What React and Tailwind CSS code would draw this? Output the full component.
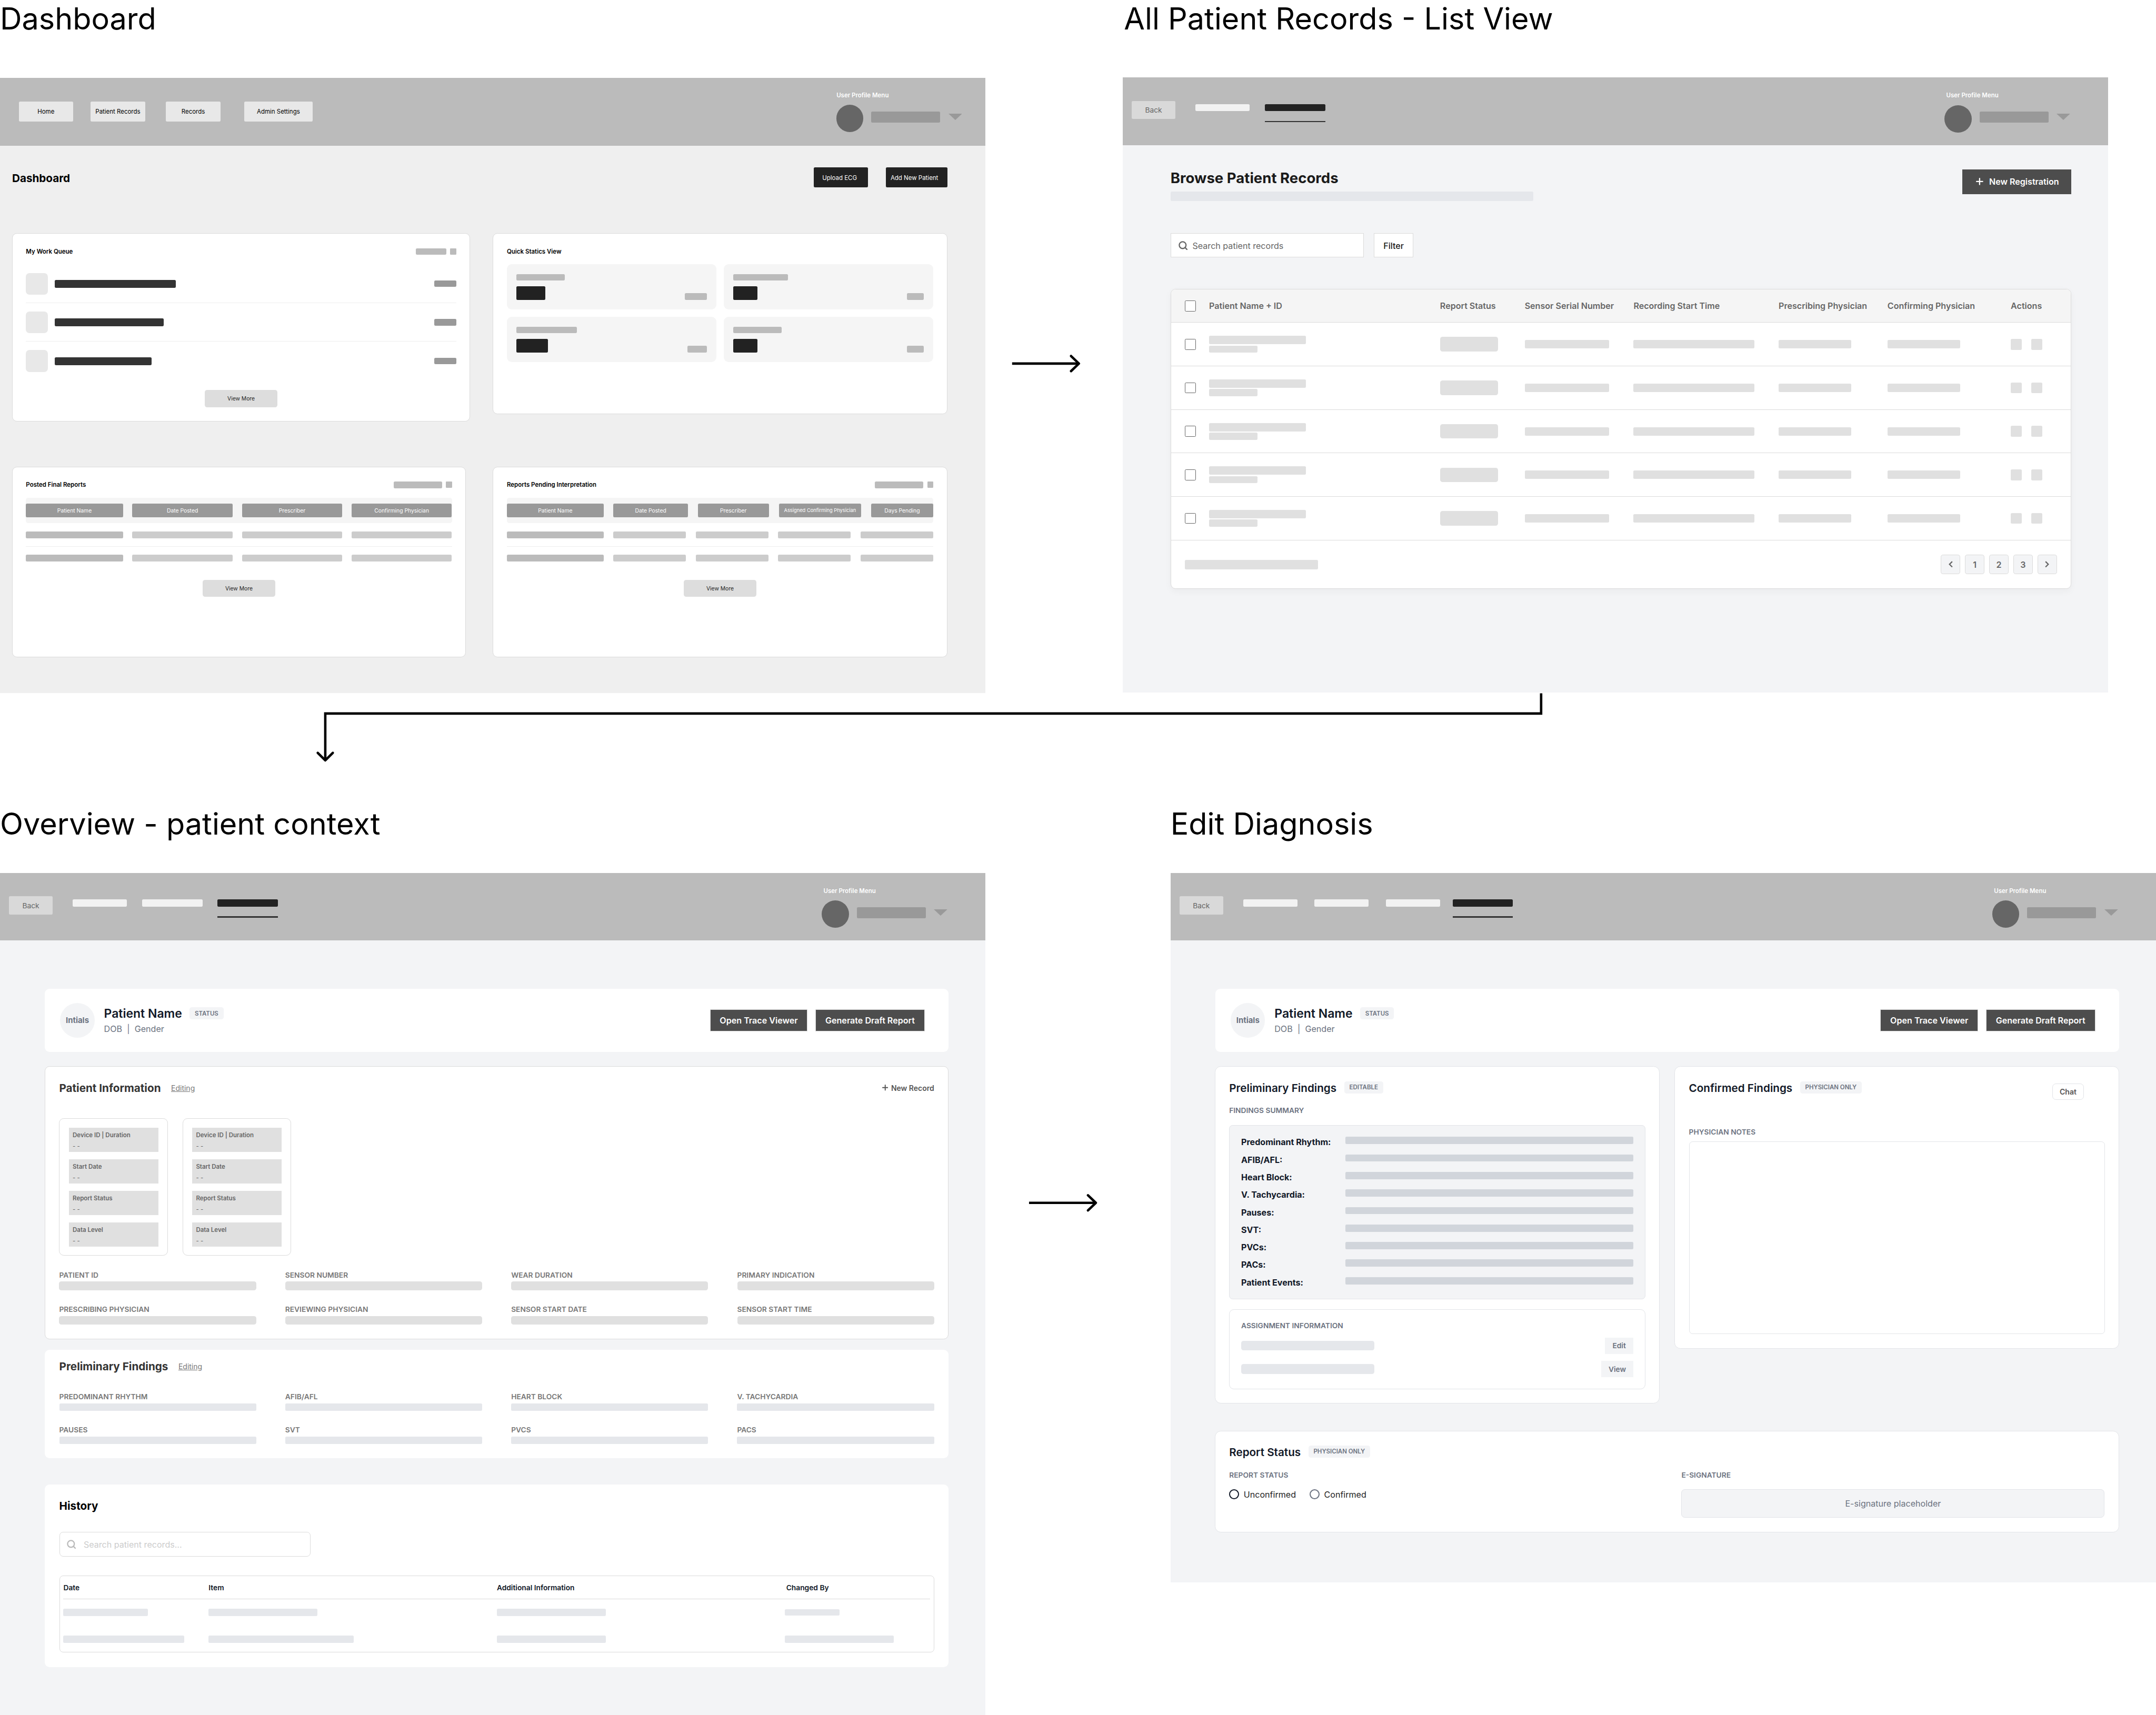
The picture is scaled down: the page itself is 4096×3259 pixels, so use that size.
const ink = "text-[#111827]";

function Caret() {
  return (
    <svg className="ml-[13.5px] mt-[14.5px] h-[10.5px] w-[22.5px]" viewBox="0 0 22.5 10.5" fill="#999999">
      <path d="M0 0H22.5L11.25 10.5Z" />
    </svg>
  );
}

function Header({ nav, profile, label = "pl-[3px]" }) {
  return (
    <header className="flex h-[112px] items-start justify-between bg-[#bbbbbb]">
      <div className="flex items-start">{nav}</div>
      <div className={profile}>
        <div className={`${label} h-[16px] pt-px text-[10px] leading-[15px] font-semibold text-white whitespace-nowrap`}>
          User Profile Menu
        </div>
        <div className="mt-[8px] flex items-start">
          <div className="size-[45px] rounded-full bg-[#666666]" />
          <div className="mt-[11px] ml-[13px] h-[18px] w-[114px] rounded-[2px] bg-[#999999]" />
          <Caret />
        </div>
      </div>
    </header>
  );
}

function BackButton() {
  return (
    <div className="mt-[39px] ml-[15px] flex h-[30px] w-[72px] items-center justify-center rounded-[2px] bg-[#d9d9d9] pt-px text-[12px] text-[#666666]">
      Back
    </div>
  );
}

function ActiveTab({ className }) {
  return (
    <div className={className}>
      <div className="mt-[44px] h-[12px] w-[100px] rounded-[2px] bg-[#222222]" />
      <div className="mt-[16px] h-[2px] w-[100px] bg-[#333333]" />
    </div>
  );
}

function Title({ children, className }) {
  return (
    <h1 className={`${className} h-[60px] text-[50.1px] leading-[60px] font-normal text-black whitespace-nowrap`}>
      {children}
    </h1>
  );
}

function ViewMore({ className }) {
  return (
    <div
      className={`${className} mx-auto flex h-[28.4px] w-[120px] items-center justify-center rounded-[4px] bg-[#dddddd] pt-px text-[9px] text-[#222222]`}
    >
      View More
    </div>
  );
}

/* ---------- Dashboard ---------- */

function CardTitle({ title, chip }) {
  return (
    <div className="flex h-[20px] items-center justify-between">
      <h3 className="pt-[1.5px] text-[10px] font-semibold text-black whitespace-nowrap">{title}</h3>
      {chip && (
        <div className="flex items-center gap-[6.5px]">
          <div className={`${chip} h-[11px] rounded-[2px] bg-[#bbbbbb]`} />
          <div className="size-[10px] rounded-[1px] bg-[#bbbbbb]" />
        </div>
      )}
    </div>
  );
}

function WorkQueue() {
  const bars = ["w-[200px]", "w-[180px]", "w-[160px]"];
  return (
    <section className="h-[311.6px] w-[758px] rounded-[8px] border border-[#dbdbdb] bg-white px-[22.3px] pt-[19.2px]">
      <CardTitle title="My Work Queue" chip="w-[50px]" />
      <div className="mt-[25.4px]">
        {bars.map((w, i) => (
          <div key={w}>
            {i > 0 && <div className="mt-[13px] mb-[14px] h-px bg-[#eeeeee]" />}
            <div className="flex h-[36px] items-center">
              <div className="size-[36px] rounded-[6px] bg-[#e8e8e8]" />
              <div className={`${w} ml-[12px] h-[13px] rounded-[2px] bg-[#333333]`} />
              <div className="ml-auto h-[11px] w-[36px] rounded-[2px] bg-[#999999]" />
            </div>
          </div>
        ))}
      </div>
      <ViewMore className="mt-[30px]" />
    </section>
  );
}

function QuickStats() {
  const tiles = [
    ["w-[80px]", "w-[48px]", "w-[36px]"],
    ["w-[90px]", "w-[40px]", "w-[28px]"],
    ["w-[100px]", "w-[52px]", "w-[32px]"],
    ["w-[80px]", "w-[40px]", "w-[28px]"],
  ];
  return (
    <section className="ml-[37.4px] h-[299.2px] w-[751.6px] rounded-[8px] border border-[#dbdbdb] bg-white px-[22.3px] pt-[19.2px]">
      <CardTitle title="Quick Statics View" />
      <div className="mt-[11.4px] grid grid-cols-2 gap-[12px]">
        {tiles.map(([a, b, c], i) => (
          <div key={i} className="h-[74.9px] rounded-[8px] bg-[#f5f5f5] p-[16px]">
            <div className={`${a} h-[11px] rounded-[2px] bg-[#bbbbbb]`} />
            <div className="mt-[9.5px] flex items-end justify-between">
              <div className={`${b} h-[22.4px] rounded-[2px] bg-[#222222]`} />
              <div className={`${c} h-[11px] rounded-[2px] bg-[#bbbbbb]`} />
            </div>
          </div>
        ))}
      </div>
    </section>
  );
}

function ReportTable({ title, className, headers, widths }) {
  const row = (
    <div className="flex justify-between">
      {widths.map((w, i) => (
        <div key={i} className={`${w} h-[11.2px] rounded-[2px] ${i === 0 ? "bg-[#bbbbbb]" : "bg-[#cccccc]"}`} />
      ))}
    </div>
  );
  return (
    <section className={`${className} h-[315.2px] rounded-[8px] border border-[#dbdbdb] bg-white px-[22.3px] pt-[19.2px]`}>
      <CardTitle title={title} chip="w-[80px]" />
      <div className="mt-[11.4px] flex h-[42px] items-center justify-between rounded-[4px] bg-[#f5f5f5]">
        {headers.map(([text, w, size = "text-[9px]"]) => (
          <div
            key={text}
            className={`${w} ${size} flex h-[22.4px] items-center justify-center rounded-[2px] bg-[#999999] pt-px whitespace-nowrap text-white`}
          >
            {text}
          </div>
        ))}
      </div>
      <div className="mt-[14px]">{row}</div>
      <div className="my-[13.2px] h-px bg-[#eeeeee]" />
      {row}
      <ViewMore className="mt-[30px]" />
    </section>
  );
}

function Dashboard() {
  const navItem =
    "mt-[39px] flex h-[33px] items-center justify-center rounded-[2px] bg-[#e8e8e8] pt-[2px] text-[10px] text-black whitespace-nowrap";
  const action = "flex h-[33px] items-center rounded-[2px] bg-[#222222] pt-[2px] text-[10px] text-white whitespace-nowrap";
  return (
    <div className="h-[1018px] w-[1630px] bg-[#efefef]">
      <Header
        profile="pt-[20.5px] pr-[39px]"
        label="pl-[0.5px]"
        nav={
          <>
            <div className={`${navItem} ml-[31px] w-[90px]`}>Home</div>
            <div className={`${navItem} ml-[29px] w-[90px]`}>Patient Records</div>
            <div className={`${navItem} ml-[34.6px] w-[90px]`}>Records</div>
            <div className={`${navItem} ml-[39.4px] w-[113px]`}>Admin Settings</div>
          </>
        }
      />
      <div className="flex items-center pt-[36px] pr-[63px] pl-[20px]">
        <h2 className="pt-[3px] text-[18px] leading-[24px] font-bold text-black">Dashboard</h2>
        <div className={`${action} ml-auto w-[90px] pl-[14px]`}>Upload ECG</div>
        <div className={`${action} ml-[29px] w-[102px] pl-[8px]`}>Add New Patient</div>
      </div>
      <div className="mt-[76px] flex h-[386px] items-start pl-[19.8px]">
        <WorkQueue />
        <QuickStats />
      </div>
      <div className="flex items-start pl-[19.8px]">
        <ReportTable
          title="Posted Final Reports"
          className="w-[750.8px]"
          headers={[
            ["Patient Name", "w-[160.5px]"],
            ["Date Posted", "w-[166px]"],
            ["Prescriber", "w-[166px]"],
            ["Confirming Physician", "w-[166px]"],
          ]}
          widths={["w-[160.5px]", "w-[166px]", "w-[166px]", "w-[166px]"]}
        />
        <ReportTable
          title="Reports Pending Interpretation"
          className="ml-[44.6px] w-[751.6px]"
          headers={[
            ["Patient Name", "w-[160px]"],
            ["Date Posted", "w-[123px]"],
            ["Prescriber", "w-[118px]"],
            ["Assigned Confirming Physician", "w-[136px]", "text-[8.1px]"],
            ["Days Pending", "w-[103px]"],
          ]}
          widths={["w-[160px]", "w-[120.3px]", "w-[120.3px]", "w-[120.3px]", "w-[120.3px]"]}
        />
      </div>
    </div>
  );
}

/* ---------- Record list ---------- */

const columns = "grid grid-cols-[40px_382px_140px_180px_240px_180px_204px_80px] items-center pl-[23px]";

function Checkbox() {
  return <div className="size-[18px] rounded-[2px] border-[1.5px] border-[#666666] bg-white" />;
}

function SearchIcon({ className }) {
  return (
    <svg className={className} viewBox="0 0 15 15" fill="none" stroke="currentColor" strokeWidth="2" strokeLinecap="round">
      <circle cx="6.8" cy="6.8" r="5.6" />
      <path d="M11 11L14 14" />
    </svg>
  );
}

function PlusIcon({ className }) {
  return (
    <svg className={className} viewBox="0 0 12 12" fill="none" stroke="currentColor" strokeWidth="2" strokeLinecap="round">
      <path d="M6 1V11M1 6H11" />
    </svg>
  );
}

function RecordList() {
  const bar = "h-[14px] rounded-[2px] bg-[#e0e0e0]";
  const pager = "flex size-[32px] items-center justify-center rounded-[4px] border border-[#dbdbdb] bg-[#f3f4f6]";
  return (
    <div className="h-[1018px] w-[1630px] bg-[#f3f4f6]">
      <Header
        profile="pt-[22px] pr-[63px]"
        nav={
          <>
            <BackButton />
            <div className="mt-[44px] ml-[33px] h-[12px] w-[90px] rounded-[2px] bg-[#f2f2f2]" />
            <ActiveTab className="ml-[25px]" />
          </>
        }
      />
      <div className="pr-[61px] pl-[79px]">
        <div className="flex h-[146px] items-start justify-between pt-[39.5px]">
          <div>
            <h2 className="text-[24px] leading-[30px] font-bold text-[#1a1a1a]">Browse Patient Records</h2>
            <div className="mt-[7.5px] h-[16px] w-[600px] rounded-[2px] bg-[#e5e7eb]" />
          </div>
          <div className="mt-[0.5px] flex h-[41px] w-[180px] items-center bg-[#4d4d4d] pl-[22px] text-[14px] font-semibold text-white">
            <PlusIcon className="mr-[10px] size-[12px]" />
            New Registration
          </div>
        </div>
        <div className="flex h-[40px] gap-[16px] text-[14px]">
          <div className="flex w-[320px] items-center border border-[#dbdbdb] bg-white pl-[12px] text-[#666666]">
            <SearchIcon className="mr-[8.5px] size-[15px]" />
            <span className="pt-px">Search patient records</span>
          </div>
          <div className="flex w-[66px] items-center justify-center border border-[#dbdbdb] bg-white pt-px font-medium text-[#1a1a1a]">
            Filter
          </div>
        </div>
        <div className="mt-[52.2px] h-[496px] overflow-hidden rounded-[8px] border border-[#dbdbdb] bg-white shadow-[0_4px_12px_rgba(0,0,0,0.04)]">
          <div
            className={`${columns} h-[55px] border-b border-[#dbdbdb] bg-[#f5f5f5] text-[14px] font-semibold whitespace-nowrap text-[#666666]`}
          >
            <Checkbox />
            <span>Patient Name + ID</span>
            <span>Report Status</span>
            <span>Sensor Serial Number</span>
            <span>Recording Start Time</span>
            <span>Prescribing Physician</span>
            <span>Confirming Physician</span>
            <span>Actions</span>
          </div>
          {[0, 1, 2, 3, 4].map((i) => (
            <div key={i} className={`${columns} h-[72px] border-b border-[#dbdbdb]`}>
              <Checkbox />
              <div>
                <div className={`${bar} w-[160px]`} />
                <div className="mt-[2px] h-[12px] w-[80px] rounded-[2px] bg-[#e0e0e0]" />
              </div>
              <div className="h-[24px] w-[96px] rounded-[4px] bg-[#e0e0e0]" />
              <div className={`${bar} w-[140px]`} />
              <div className={`${bar} w-[200px]`} />
              <div className={`${bar} w-[120px]`} />
              <div className={`${bar} w-[120px]`} />
              <div className="flex gap-[16px]">
                <div className="size-[18px] rounded-[2px] bg-[#e0e0e0]" />
                <div className="size-[18px] rounded-[2px] bg-[#e0e0e0]" />
              </div>
            </div>
          ))}
          <div className="flex h-[80px] items-center justify-between px-[23px]">
            <div className="h-[16px] w-[220px] rounded-[2px] bg-[#e0e0e0]" />
            <div className="flex gap-[8px] text-[14px] font-semibold text-[#666666]">
              <div className={pager}>
                <svg className="h-[11px] w-[7px]" viewBox="0 0 7 11" fill="none" stroke="currentColor" strokeWidth="2">
                  <path d="M6 1L1.5 5.5L6 10" />
                </svg>
              </div>
              <div className={pager}>1</div>
              <div className={pager}>2</div>
              <div className={pager}>3</div>
              <div className={pager}>
                <svg className="h-[11px] w-[7px]" viewBox="0 0 7 11" fill="none" stroke="currentColor" strokeWidth="2">
                  <path d="M1 1L5.5 5.5L1 10" />
                </svg>
              </div>
            </div>
          </div>
        </div>
      </div>
    </div>
  );
}

/* ---------- Shared patient pieces ---------- */

function Badge({ children, className }) {
  return (
    <span
      className={`${className} flex h-[20px] items-center justify-center rounded-[4px] bg-[#f3f4f6] pt-px text-[10px] font-semibold whitespace-nowrap text-[#6b7280]`}
    >
      {children}
    </span>
  );
}

function PatientBanner() {
  const button =
    "flex h-[36.6px] items-center justify-center border border-[#dddddd] bg-[#4d4d4d] text-[14px] font-semibold whitespace-nowrap text-white";
  return (
    <section className="flex h-[104px] w-[1495px] items-center rounded-[8px] bg-white pr-[39.3px] pl-[25.5px]">
      <div className="flex size-[57px] items-center justify-center rounded-full bg-[#f3f4f6] pt-px text-[13px] font-bold text-[#6b7280]">
        Intials
      </div>
      <div className="ml-[15.5px]">
        <div className={`${ink} flex h-[24px] items-center gap-[12.5px] text-[20px] font-semibold whitespace-nowrap`}>
          <span className="pt-[1.5px]">Patient Name</span>
          <Badge className="w-[56px]">STATUS</Badge>
        </div>
        <div className="mt-[3px] flex h-[20px] items-center gap-[8px] pt-[1.5px] text-[14px] text-[#6b7280]">
          <span>DOB</span>
          <span>|</span>
          <span>Gender</span>
        </div>
      </div>
      <div className={`${button} ml-auto w-[161.5px]`}>Open Trace Viewer</div>
      <div className={`${button} ml-[12.7px] w-[181.3px]`}>Generate Draft Report</div>
    </section>
  );
}

/* ---------- Overview ---------- */

function SectionTitle({ title, action }) {
  return (
    <div className="flex h-[24px] items-center">
      <h3 className="text-[18px] font-bold whitespace-nowrap text-[#333333]">{title}</h3>
      <span className="ml-[17px] text-[12.2px] text-[#777777] underline">Editing</span>
      {action}
    </div>
  );
}

function Fields({ className, labels, bar }) {
  return (
    <div className={`${className} grid grid-cols-4 gap-x-[48px]`}>
      {labels.map((label) => (
        <div key={label}>
          <div className="text-[12px] leading-[16px] font-semibold whitespace-nowrap text-[#777777]">{label}</div>
          <div className={bar} />
        </div>
      ))}
    </div>
  );
}

function DeviceCard() {
  return (
    <div className="flex h-[227.4px] w-[180px] flex-col gap-[12px] rounded-[8px] border border-[#dbdbdb] px-[15px] pt-[14.7px]">
      {["Device ID | Duration", "Start Date", "Report Status", "Data Level"].map((label) => (
        <div key={label} className="h-[40.2px] bg-[#e0e0e0] px-[6.5px] pt-[5.5px] text-[10px] leading-[14px] text-[#666666]">
          <div className="font-semibold whitespace-nowrap">{label}</div>
          <div className="mt-[4px]">- -</div>
        </div>
      ))}
    </div>
  );
}

function Overview() {
  const history = "grid grid-cols-[240.2px_476.7px_476.7px_1fr] items-center";
  const bar = "h-[12px] rounded-[2px] bg-[#e5e7eb]";
  return (
    <div className="h-[1394px] w-[1630px] bg-[#f3f4f6]">
      <Header
        profile="pt-[22px] pr-[63px]"
        nav={
          <>
            <BackButton />
            <div className="mt-[44px] ml-[33px] h-[12px] w-[90px] rounded-[2px] bg-[#f2f2f2]" />
            <div className="mt-[44px] ml-[25px] h-[12px] w-[100px] rounded-[2px] bg-[#f2f2f2]" />
            <ActiveTab className="ml-[25px]" />
          </>
        }
      />
      <div className="pt-[80px] pl-[74px]">
        <PatientBanner />

        <section className="mt-[24.3px] h-[451px] w-[1495px] rounded-[8px] border border-[#dbdbdb] bg-white px-[23px] pt-[22.5px]">
          <SectionTitle
            title="Patient Information"
            action={
              <div className="ml-auto flex items-center text-[12.2px] font-semibold text-[#555555]">
                <PlusIcon className="mr-[5px] size-[10px]" />
                New Record
              </div>
            }
          />
          <div className="mt-[38.3px] flex gap-[24px]">
            <DeviceCard />
            <DeviceCard />
          </div>
          <Fields
            className="mt-[24px]"
            labels={["PATIENT ID", "SENSOR NUMBER", "WEAR DURATION", "PRIMARY INDICATION"]}
            bar="mt-[3px] h-[14.2px] rounded-[4px] bg-[#e0e0e0]"
          />
          <Fields
            className="mt-[24px]"
            labels={["PRESCRIBING PHYSICIAN", "REVIEWING PHYSICIAN", "SENSOR START DATE", "SENSOR START TIME"]}
            bar="mt-[3px] h-[14.2px] rounded-[4px] bg-[#e0e0e0]"
          />
        </section>

        <section className="mt-[17.5px] h-[180px] w-[1495px] rounded-[8px] bg-white px-[24px] pt-[15.8px]">
          <SectionTitle title="Preliminary Findings" />
          <Fields
            className="mt-[30px]"
            labels={["PREDOMINANT RHYTHM", "AFIB/AFL", "HEART BLOCK", "V. TACHYCARDIA"]}
            bar="mt-[3.5px] h-[12px] rounded-[2px] bg-[#e5e7eb]"
          />
          <Fields
            className="mt-[23.4px]"
            labels={["PAUSES", "SVT", "PVCS", "PACS"]}
            bar="mt-[3.5px] h-[12px] rounded-[2px] bg-[#e5e7eb]"
          />
        </section>

        <section className="mt-[43px] h-[302px] w-[1495px] rounded-[8px] bg-white px-[24px] pt-[23.9px]">
          <h3 className="h-[24px] text-[18px] leading-[24px] font-bold text-black">History</h3>
          <div className="mt-[30.6px] flex h-[40.7px] w-[415.6px] items-center rounded-[6px] border border-[#dbdbdb] pl-[11.5px] text-[14px] text-[#cccccc]">
            <SearchIcon className="mr-[13px] size-[15px] text-[#bbbbbb]" />
            <span className="pt-px">Search patient records...</span>
          </div>
          <div className="mt-[32px] h-[126.4px] rounded-[6px] border border-[#dbdbdb] px-[6px]">
            <div className={`${history} ${ink} h-[37.9px] border-b border-[#dbdbdb] pt-[1.5px] text-[12px] font-semibold whitespace-nowrap`}>
              <span>Date</span>
              <span>Item</span>
              <span>Additional Information</span>
              <span className="pl-[2px]">Changed By</span>
            </div>
            <div className={`${history} mt-[16px] h-[12px]`}>
              <div className={`${bar} w-[140px]`} />
              <div className={`${bar} w-[180px]`} />
              <div className={`${bar} w-[180px]`} />
              <div className="h-[10px] w-[90px] rounded-[2px] bg-[#e5e7eb]" />
            </div>
            <div className={`${history} mt-[32.2px] h-[12px]`}>
              <div className={`${bar} w-[200px]`} />
              <div className={`${bar} w-[240px]`} />
              <div className={`${bar} w-[180px]`} />
              <div className={`${bar} w-[180px]`} />
            </div>
          </div>
        </section>
      </div>
    </div>
  );
}

/* ---------- Edit diagnosis ---------- */

function BadgeTitle({ title, badge, width }) {
  return (
    <div className={`${ink} flex h-[24px] items-center gap-[13px] text-[18px] font-semibold whitespace-nowrap`}>
      <span className="pt-px">{title}</span>
      <Badge className={width}>{badge}</Badge>
    </div>
  );
}

function Caption({ children, className }) {
  return (
    <div className={`${className} h-[16px] pt-px text-[12px] leading-[15px] font-semibold whitespace-nowrap text-[#6b7280]`}>
      {children}
    </div>
  );
}

function EditDiagnosis() {
  const tab = "mt-[44px] h-[12px] w-[90px] rounded-[2px] bg-[#f2f2f2]";
  const card = "rounded-[10px] border border-[#e2e4e8] bg-white";
  const findings = [
    "Predominant Rhythm:",
    "AFIB/AFL:",
    "Heart Block:",
    "V. Tachycardia:",
    "Pauses:",
    "SVT:",
    "PVCs:",
    "PACs:",
    "Patient Events:",
  ];
  const chip = "flex h-[27px] items-center justify-center bg-[#f3f4f6] pt-px text-[12px] font-semibold text-[#6b7280]";
  return (
    <div className="h-[1174px] w-[1630px] bg-[#f3f4f6]">
      <Header
        profile="pt-[22px] pr-[63px]"
        nav={
          <>
            <BackButton />
            <div className={`${tab} ml-[33px]`} />
            <div className={`${tab} ml-[28px]`} />
            <div className={`${tab} ml-[28px]`} />
            <ActiveTab className="ml-[20.5px]" />
          </>
        }
      />
      <div className="pt-[80px] pl-[74px]">
        <PatientBanner />

        <div className="mt-[24.3px] -ml-[0.5px] flex h-[603px] w-[1495.5px] items-start justify-between">
          <section className={`${card} h-[558px] w-[735.5px] px-[22.7px] pt-[22px]`}>
            <BadgeTitle title="Preliminary Findings" badge="EDITABLE" width="w-[64px]" />
            <Caption className="mt-[18.3px]">FINDINGS SUMMARY</Caption>
            <div className="mt-[16px] h-[287.7px] rounded-[6px] border border-[#e2e4e8] bg-[#f3f4f6] px-[19px] pt-[13.3px]">
              {findings.map((label) => (
                <div key={label} className="flex h-[29px] items-start justify-between">
                  <span className={`${ink} text-[14px] leading-[28px] font-bold`}>{label}</span>
                  <div className="mt-[5.3px] h-[12px] w-[476.5px] rounded-[2px] bg-[#d1d5db]" />
                </div>
              ))}
            </div>
            <div className="mt-[17px] h-[132px] rounded-[8px] border border-[#e2e4e8] px-[19px] pt-[18.4px]">
              <Caption>ASSIGNMENT INFORMATION</Caption>
              <div className="mt-[11.5px] flex items-center justify-between">
                <div className="h-[16px] w-[220px] rounded-[4px] bg-[#e5e7eb]" />
                <div className={`${chip} w-[47px]`}>Edit</div>
              </div>
              <div className="mt-[11.7px] flex items-center justify-between">
                <div className="h-[16px] w-[220px] rounded-[4px] bg-[#e5e7eb]" />
                <div className={`${chip} w-[53.3px]`}>View</div>
              </div>
            </div>
          </section>

          <section className={`${card} h-[467px] w-[735.5px] px-[23px] pt-[22px]`}>
            <div className="flex h-[77.2px] items-start justify-between pr-[34px]">
              <BadgeTitle title="Confirmed Findings" badge="PHYSICIAN ONLY" width="w-[101.4px]" />
              <div className="mt-[5.3px] flex h-[27px] w-[53px] items-center justify-center rounded-[6px] border border-[#e2e4e8] pt-px text-[12.3px] font-semibold text-[#555555]">
                Chat
              </div>
            </div>
            <Caption>PHYSICIAN NOTES</Caption>
            <div className="mt-[8px] h-[318.6px] rounded-[6px] border border-[#e2e4e8]" />
          </section>
        </div>

        <section className={`${card} -ml-[0.5px] flex h-[168px] w-[1495.5px] px-[22.7px] pt-[21.4px]`}>
          <div className="w-[748px]">
            <BadgeTitle title="Report Status" badge="PHYSICIAN ONLY" width="w-[101.4px]" />
            <Caption className="mt-[18.5px]">REPORT STATUS</Caption>
            <div className="mt-[14px] flex h-[20px] items-center text-[14px] text-[#222222]">
              <div className="size-[16.5px] rounded-full border-2 border-[#111827]" />
              <span className="ml-[7.5px] w-[109px] pt-px">Unconfirmed</span>
              <div className="size-[16.5px] rounded-full border-2 border-[#6b7280]" />
              <span className="ml-[7.5px] pt-px">Confirmed</span>
            </div>
          </div>
          <div className="w-[700px] pt-[42.5px]">
            <Caption>E-SIGNATURE</Caption>
            <div className="mt-[15.5px] flex h-[47.5px] items-center justify-center rounded-[6px] border border-[#e2e4e8] bg-[#f3f4f6] pt-px text-[14px] text-[#6b7280]">
              E-signature placeholder
            </div>
          </div>
        </section>
      </div>
    </div>
  );
}

/* ---------- Board ---------- */

function Connectors() {
  return (
    <svg
      className="pointer-events-none absolute inset-0 h-[2837px] w-[3566px]"
      viewBox="0 0 3566 2837"
      fill="none"
      stroke="black"
      strokeWidth="4"
    >
      <path d="M1674 601.5H1783" />
      <path d="M1771.5 589L1784.5 601.5L1771.5 614" strokeLinecap="round" strokeLinejoin="round" />
      <path d="M2549 1147V1180.4H536M538 1180V1257" />
      <path d="M525.5 1245.5L538 1258L550.5 1245.5" strokeLinecap="round" strokeLinejoin="round" />
      <path d="M1702 1990H1811" />
      <path d="M1799.5 1977.5L1812.5 1990L1799.5 2002.5" strokeLinecap="round" strokeLinejoin="round" />
    </svg>
  );
}

export default function App() {
  return (
    <div className="relative h-[2837.3px] w-[3566px] overflow-hidden bg-white font-['Inter',sans-serif] [zoom:1.14863]">
      <div className="flex h-[1332.5px] items-start">
        <div className="w-[1857px]">
          <Title className="mt-[0.6px] mb-[68.4px]">Dashboard</Title>
          <Dashboard />
        </div>
        <div>
          <Title className="mt-[0.6px] mb-[67.4px] pl-[2px]">All Patient Records - List View</Title>
          <RecordList />
        </div>
      </div>
      <div className="flex items-start">
        <div className="w-[1936px]">
          <Title className="mb-[51.5px]">Overview - patient context</Title>
          <Overview />
        </div>
        <div>
          <Title className="mb-[51.5px]">Edit Diagnosis</Title>
          <EditDiagnosis />
        </div>
      </div>
      <Connectors />
    </div>
  );
}
